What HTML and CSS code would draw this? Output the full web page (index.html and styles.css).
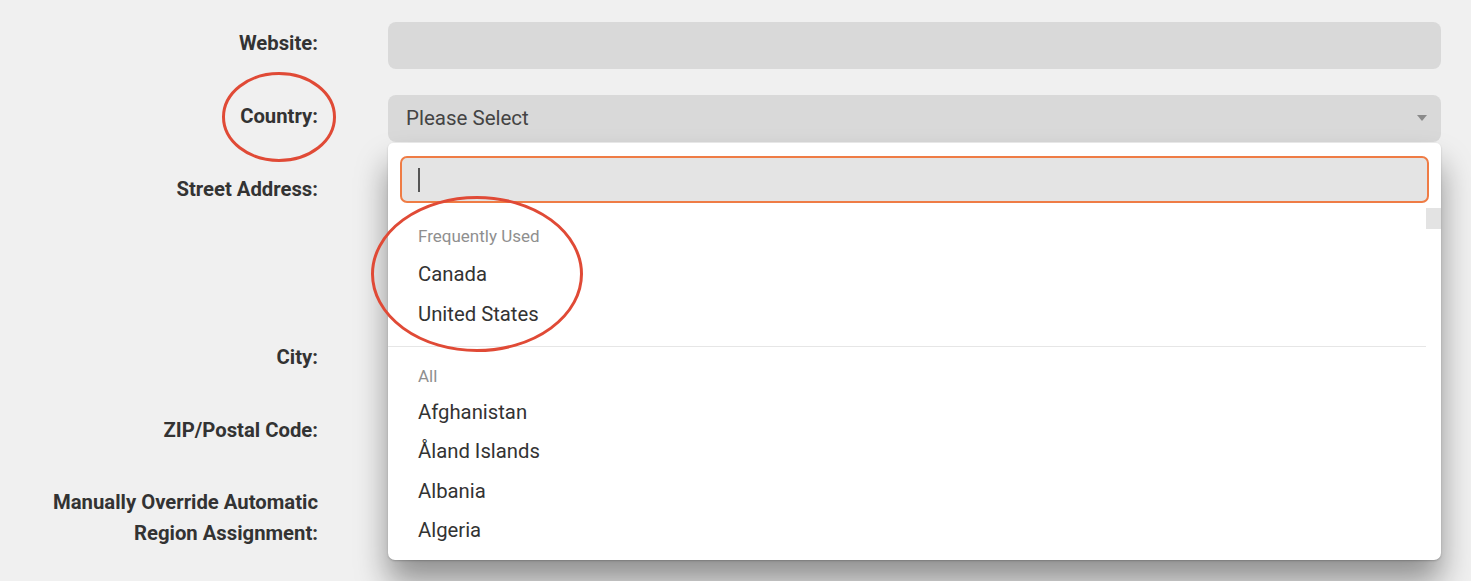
FILE: index.html
```html
<!DOCTYPE html>
<html lang="en">
<head>
<meta charset="utf-8">
<title>Address form</title>
<link rel="stylesheet" href="styles.css">
</head>
<body>
<div class="form">
  <div class="lbl">Website:</div>
  <div class="field"><div class="input"></div></div>

  <div class="lbl">Country:</div>
  <div class="field">
    <div class="select">
      <span class="placeholder">Please Select</span>
      <span class="arrow"></span>
      <div class="dropdown">
        <div class="search"><span class="caret"></span></div>
        <div class="list">
          <div class="thumb"></div>
          <div class="group first">
            <div class="ghead">Frequently Used</div>
            <div class="item fi">Canada</div>
            <div class="item fi">United States</div>
          </div>
          <div class="group">
            <div class="ghead">All</div>
            <div class="item">Afghanistan</div>
            <div class="item">Åland Islands</div>
            <div class="item">Albania</div>
            <div class="item">Algeria</div>
          </div>
        </div>
      </div>
    </div>
  </div>

  <div class="lbl">Street Address:</div>
  <div class="field"><div class="input tall"></div></div>

  <div class="lbl">City:</div>
  <div class="field"><div class="input"></div></div>

  <div class="lbl">ZIP/Postal Code:</div>
  <div class="field"><div class="input"></div></div>

  <div class="lbl two">Manually Override Automatic<br>Region Assignment:</div>
  <div class="field"><div class="input"></div></div>
</div>

<svg class="mark mark1" width="130" height="100" viewBox="0 0 130 100"><ellipse cx="65" cy="50" rx="55.5" ry="43.5" fill="none" stroke="#e04a36" stroke-width="3"/></svg>
<svg class="mark mark2" width="230" height="170" viewBox="0 0 230 170"><ellipse cx="115" cy="85" rx="104.5" ry="76.5" fill="none" stroke="#e04a36" stroke-width="3"/></svg>
</body>
</html>
```

FILE: styles.css
```css
html, body {
  margin: 0;
  padding: 0;
  background: #f0f0f0;
  font-family: Roboto, "Noto Sans", sans-serif;
  overflow: hidden;
}
body {
  position: relative;
  width: 1471px;
  height: 581px;
}
.form {
  display: grid;
  grid-template-columns: 318px 1053px;
  column-gap: 70px;
  row-gap: 26px;
  padding-top: 22px;
}
.lbl {
  text-align: right;
  font-weight: 700;
  font-size: 20.3px;
  line-height: 42px;
  color: #333;
}
.lbl.two {
  line-height: 31px;
  padding-top: 5px;
}
.input {
  height: 47px;
  background: #d9d9d9;
  border-radius: 8px;
}
.input.tall { height: 142px; }

.select {
  position: relative;
  height: 47px;
  background: #d9d9d9;
  border-radius: 8px;
  display: flex;
  align-items: center;
  padding-left: 18px;
}
.placeholder {
  font-size: 20.5px;
  color: #444;
  padding-bottom: 2px;
}
.arrow {
  position: absolute;
  right: 14px;
  top: 20px;
  width: 0;
  height: 0;
  border-left: 5.5px solid transparent;
  border-right: 5.5px solid transparent;
  border-top: 6px solid #8a8a8a;
}
.dropdown {
  position: absolute;
  left: 0;
  right: 0;
  top: 48px;
  height: 417px;
  background: #fff;
  border-radius: 5px 5px 7px 7px;
  box-shadow: 0 1px 2px rgba(0, 0, 0, 0.2), 0 22px 32px rgba(0, 0, 0, 0.4);
  z-index: 5;
  display: flex;
  flex-direction: column;
}
.search {
  margin: 13px 12px 0;
  height: 47px;
  box-sizing: border-box;
  border: 2px solid #ef7c45;
  border-radius: 7px;
  background: #e4e4e4;
  display: flex;
  align-items: center;
  padding-left: 16px;
}
.caret {
  width: 1.5px;
  height: 24px;
  background: #555;
}
.list {
  position: relative;
  flex: 1;
  overflow: hidden;
  border-radius: 0 0 7px 7px;
}
.thumb {
  position: absolute;
  right: 0;
  top: 5px;
  width: 15px;
  height: 21px;
  background: #e3e3e3;
}
.group {
  margin-right: 15px;
  padding-top: 17px;
}
.group.first {
  padding-top: 21px;
  padding-bottom: 12px;
  border-bottom: 1px solid #e6e6e6;
}
.ghead {
  padding-left: 30px;
  font-size: 17px;
  line-height: 24px;
  color: #8f8f8f;
  margin-bottom: 5.5px;
}
.item {
  padding-left: 30px;
  font-size: 20.3px;
  line-height: 39.33px;
  color: #333;
}
.item.fi {
  line-height: 40px;
}
.mark {
  position: absolute;
  z-index: 10;
}
.mark1 { left: 214px; top: 67px; }
.mark2 { left: 362px; top: 189px; }
```
